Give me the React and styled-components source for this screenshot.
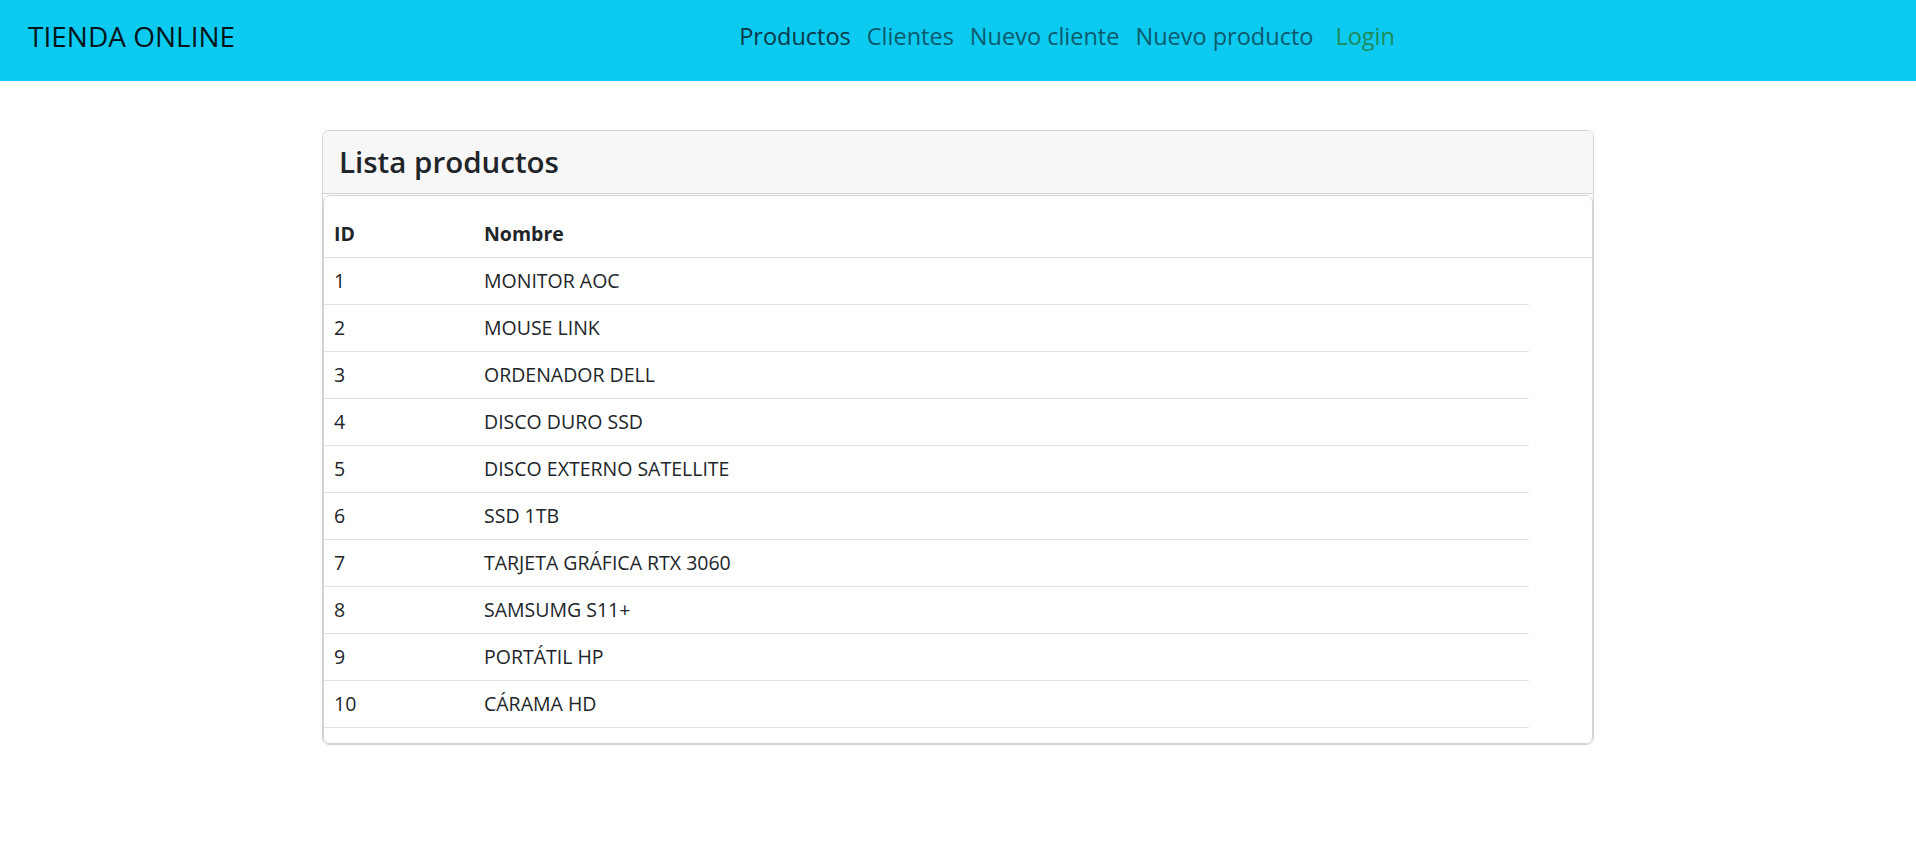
import React from 'react';
import styled, { createGlobalStyle } from 'styled-components';

const GlobalStyle = createGlobalStyle`
  * { box-sizing: border-box; }
  body {
    margin: 0;
    background: #ffffff;
    color: #212529;
    font-family: "Open Sans", "Noto Sans", "Liberation Sans", sans-serif;
  }
`;

const NavBar = styled.nav`
  display: flex;
  align-items: center;
  height: 81px;
  padding: 0 37px 9px 28px;
  background-color: #0dcaf0;
`;

const Brand = styled.a`
  margin-right: 20px;
  font-size: 28px;
  color: #03161c;
  text-decoration: none;
  white-space: nowrap;
`;

const NavList = styled.ul`
  display: flex;
  align-items: center;
  gap: 16px;
  margin: 0 auto;
  padding: 0;
  list-style: none;
`;

const NavLink = styled.a`
  display: block;
  font-size: 23.5px;
  text-decoration: none;
  color: ${(p) => (p.$active ? '#07394a' : p.$success ? '#1d8a5a' : '#0a5a6d')};
  margin-left: ${(p) => (p.$success ? '6px' : '0')};
`;

const Card = styled.section`
  max-width: 1272px;
  margin: 49px auto 0;
  border: 1px solid #d3d3d3;
  border-radius: 7px;
  overflow: hidden;
`;

const CardHeader = styled.header`
  height: 63px;
  display: flex;
  align-items: center;
  padding: 0 16px 2px;
  background: #f7f7f7;
  border-bottom: 1px solid #d3d3d3;
`;

const Title = styled.h3`
  margin: 0;
  font-size: 29.5px;
  font-weight: 600;
  color: #212529;
`;

const CardBody = styled.div`
  margin-top: 1px;
  border: 1px solid #d3d3d3;
  border-radius: 7px;
  padding: 15px 0 15px;
`;

const Table = styled.table`
  width: 100%;
  border-collapse: collapse;
  font-size: 19.5px;
  line-height: 30px;
  color: #212529;
`;

const Th = styled.th`
  text-align: left;
  font-weight: 700;
  padding: 8px 10px;
  border-bottom: 1px solid #dee2e6;
  width: ${(p) => p.$width || 'auto'};
`;

const Td = styled.td`
  padding: 8px 10px;
  border-bottom: 1px solid #dee2e6;
`;

const productos = [
  { id: 1, nombre: 'MONITOR AOC' },
  { id: 2, nombre: 'MOUSE LINK' },
  { id: 3, nombre: 'ORDENADOR DELL' },
  { id: 4, nombre: 'DISCO DURO SSD' },
  { id: 5, nombre: 'DISCO EXTERNO SATELLITE' },
  { id: 6, nombre: 'SSD 1TB' },
  { id: 7, nombre: 'TARJETA GRÁFICA RTX 3060' },
  { id: 8, nombre: 'SAMSUMG S11+' },
  { id: 9, nombre: 'PORTÁTIL HP' },
  { id: 10, nombre: 'CÁRAMA HD' },
];

export default function App() {
  return (
    <>
      <GlobalStyle />
      <NavBar>
        <Brand href="#">TIENDA ONLINE</Brand>
        <NavList>
          <li><NavLink href="#" $active>Productos</NavLink></li>
          <li><NavLink href="#">Clientes</NavLink></li>
          <li><NavLink href="#">Nuevo cliente</NavLink></li>
          <li><NavLink href="#">Nuevo producto</NavLink></li>
          <li><NavLink href="#" $success>Login</NavLink></li>
        </NavList>
      </NavBar>

      <Card>
        <CardHeader>
          <Title>Lista productos</Title>
        </CardHeader>
        <CardBody>
          <Table>
            <thead>
              <tr>
                <Th $width="150px">ID</Th>
                <Th>Nombre</Th>
                <Th $width="63px" />
              </tr>
            </thead>
            <tbody>
              {productos.map((p) => (
                <tr key={p.id}>
                  <Td>{p.id}</Td>
                  <Td>{p.nombre}</Td>
                </tr>
              ))}
            </tbody>
          </Table>
        </CardBody>
      </Card>
    </>
  );
}
